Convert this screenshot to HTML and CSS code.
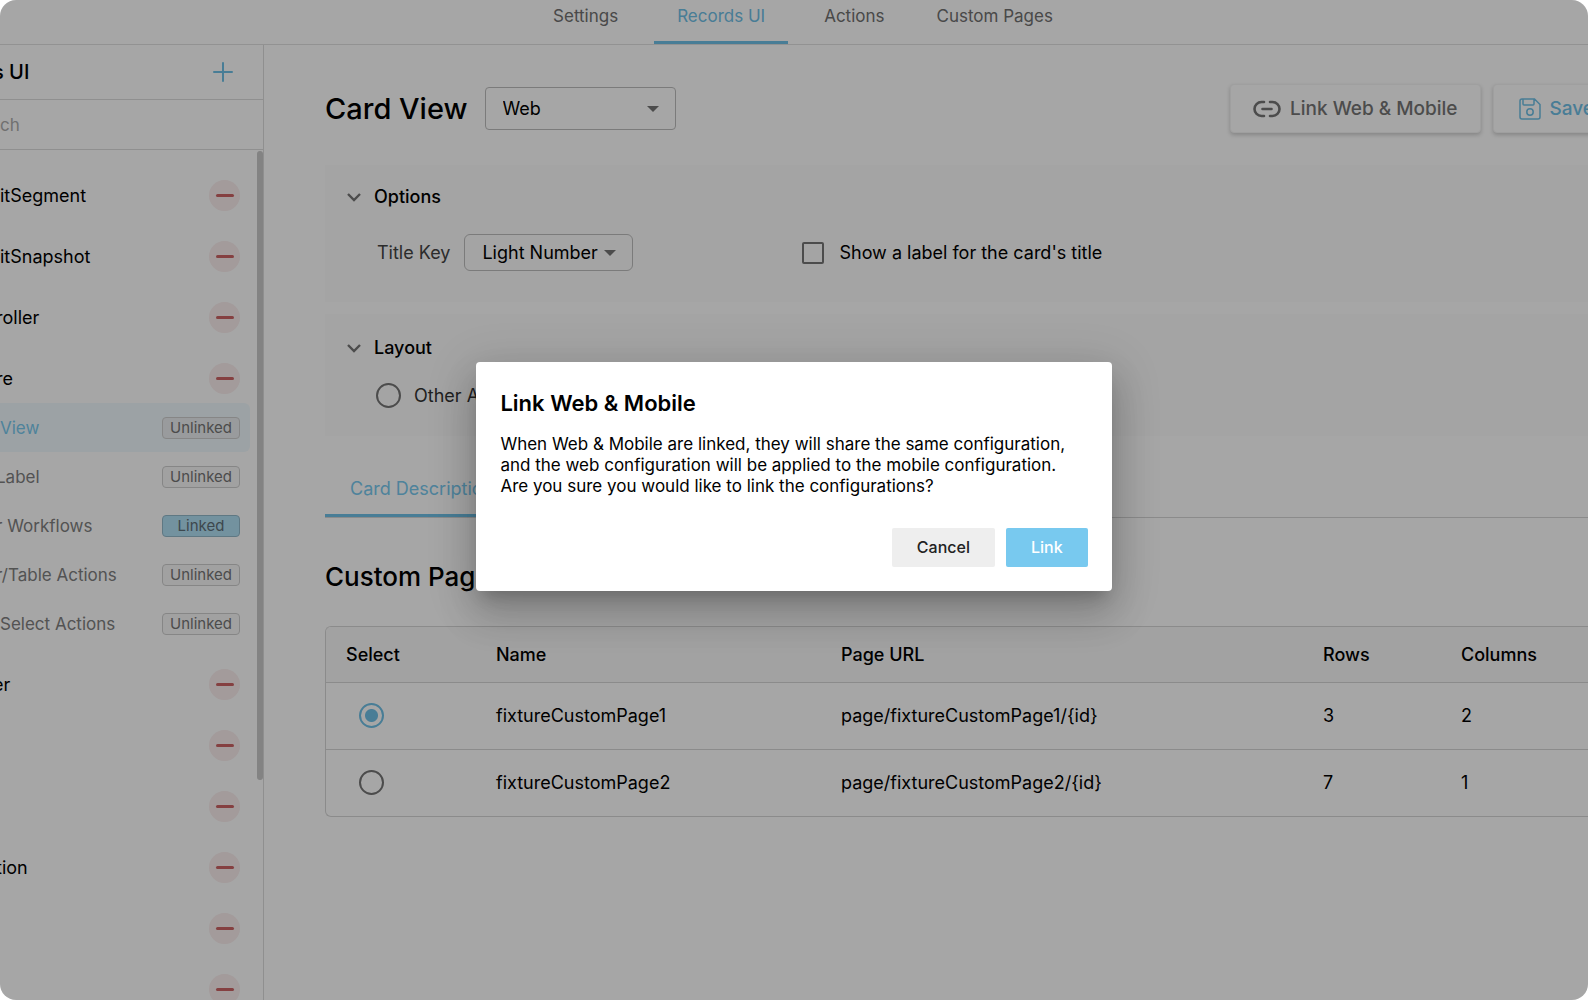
FILE: index.html
```html
<!DOCTYPE html>
<html lang="en">
<head>
    <meta charset="UTF-8">
    <meta name="viewport" content="width=device-width, initial-scale=1.0">
    <title>Records UI</title>
    <link rel="stylesheet" href="styles.css">
</head>
<body>
    <div class="app">
        <nav class="topbar">
            <a href="#" class="tab">Settings</a>
            <a href="#" class="tab active">Records UI</a>
            <a href="#" class="tab">Actions</a>
            <a href="#" class="tab wide">Custom Pages</a>
        </nav>

        <div class="layout">
            <aside class="sidebar">
                <div class="sidebar-title">
                    <h2 class="cut-deep">s UI</h2>
                    <button class="add" aria-label="Add">
                        <svg width="20" height="20" viewBox="0 0 20 20"><path d="M10 1v18M1 10h18" stroke="currentColor" stroke-width="2" stroke-linecap="round"/></svg>
                    </button>
                </div>
                <input class="search" type="text" placeholder="ch" aria-label="Search">
                <div class="list">
                    <ul class="records">
                        <li><div class="record"><span>itSegment</span><button class="remove" aria-label="Remove"></button></div></li>
                        <li><div class="record"><span>itSnapshot</span><button class="remove" aria-label="Remove"></button></div></li>
                        <li><div class="record"><span class="cut">roller</span><button class="remove" aria-label="Remove"></button></div></li>
                        <li>
                            <div class="record"><span class="cut">re</span><button class="remove" aria-label="Remove"></button></div>
                            <a href="#" class="view active"><span>View</span><span class="badge">Unlinked</span></a>
                            <a href="#" class="view"><span class="cut">Label</span><span class="badge">Unlinked</span></a>
                            <a href="#" class="view"><span class="cut">r Workflows</span><span class="badge linked">Linked</span></a>
                            <a href="#" class="view"><span class="cut">r/Table Actions</span><span class="badge">Unlinked</span></a>
                            <a href="#" class="view"><span>Select Actions</span><span class="badge">Unlinked</span></a>
                        </li>
                        <li><div class="record"><span class="cut-deep">er</span><button class="remove" aria-label="Remove"></button></div></li>
                        <li><div class="record"><span></span><button class="remove" aria-label="Remove"></button></div></li>
                        <li><div class="record"><span></span><button class="remove" aria-label="Remove"></button></div></li>
                        <li><div class="record"><span class="cut">tion</span><button class="remove" aria-label="Remove"></button></div></li>
                        <li><div class="record"><span></span><button class="remove" aria-label="Remove"></button></div></li>
                        <li><div class="record"><span></span><button class="remove" aria-label="Remove"></button></div></li>
                    </ul>
                    <div class="scrollbar"></div>
                </div>
            </aside>

            <main class="content">
                <div class="page-head">
                    <h1>Card View</h1>
                    <div class="select platform">
                        <select aria-label="Platform"><option>Web</option></select>
                    </div>
                    <div class="actions">
                        <button class="raised">
                            <svg width="28" height="18" viewBox="0 0 28 18" fill="none" stroke="currentColor" stroke-width="2.600" stroke-linecap="round"><path d="M11 2H8.500a7 7 0 0 0 0 14H11M17 2h2.500a7 7 0 0 1 0 14H17M9.500 9h9"/></svg>
                            Link Web &amp; Mobile
                        </button>
                        <button class="raised save">
                            <svg width="22" height="22" viewBox="0 0 22 22" fill="none" stroke="currentColor" stroke-width="1.500"><path d="M3 1h12.500L21 6.500V19a2 2 0 0 1-2 2H3a2 2 0 0 1-2-2V3a2 2 0 0 1 2-2zM4 1v5a1 1 0 0 0 1 1h9a1 1 0 0 0 1-1V1"/><circle cx="11" cy="14" r="3.200"/></svg>
                            Save
                        </button>
                    </div>
                </div>

                <section class="panel options">
                    <h3><svg width="14" height="9" viewBox="0 0 14 9"><path d="M1 1l6 6 6-6" fill="none" stroke="currentColor" stroke-width="2.400"/></svg>Options</h3>
                    <div class="options-row">
                        <label for="titleKey" class="key-label">Title Key</label>
                        <div class="select title-key">
                            <select id="titleKey"><option>Light Number</option></select>
                        </div>
                        <label class="check"><input type="checkbox">Show a label for the card's title</label>
                    </div>
                </section>

                <section class="panel card-layout">
                    <h3><svg width="14" height="9" viewBox="0 0 14 9"><path d="M1 1l6 6 6-6" fill="none" stroke="currentColor" stroke-width="2.400"/></svg>Layout</h3>
                    <label class="radio-label"><input type="radio" name="cardLayout">Other Actions</label>
                </section>

                <nav class="subtabs">
                    <a href="#" class="subtab">Card Description</a>
                </nav>

                <h2 class="section-title">Custom Pages</h2>
                <div class="table-wrap">
                    <table>
                        <thead>
                            <tr>
                                <th class="col-select">Select</th>
                                <th class="col-name">Name</th>
                                <th class="col-url">Page URL</th>
                                <th class="col-rows">Rows</th>
                                <th>Columns</th>
                            </tr>
                        </thead>
                        <tbody>
                            <tr>
                                <td><input type="radio" name="page" aria-label="fixtureCustomPage1" checked></td>
                                <td>fixtureCustomPage1</td>
                                <td>page/fixtureCustomPage1/{id}</td>
                                <td>3</td>
                                <td>2</td>
                            </tr>
                            <tr>
                                <td><input type="radio" name="page" aria-label="fixtureCustomPage2"></td>
                                <td>fixtureCustomPage2</td>
                                <td>page/fixtureCustomPage2/{id}</td>
                                <td>7</td>
                                <td>1</td>
                            </tr>
                        </tbody>
                    </table>
                </div>
            </main>
        </div>

        <div class="overlay">
            <div class="modal" role="dialog" aria-modal="true" aria-labelledby="modalTitle">
                <h2 id="modalTitle">Link Web &amp; Mobile</h2>
                <p>When Web &amp; Mobile are linked, they will share the same configuration, and the web configuration will be applied to the mobile configuration. Are you sure you would like to link the configurations?</p>
                <div class="modal-actions">
                    <button class="btn">Cancel</button>
                    <button class="btn primary">Link</button>
                </div>
            </div>
        </div>
    </div>
</body>
</html>
```
FILE: styles.css
```css
* {
    box-sizing: border-box;
}
body {
    margin: 0;
    background: white;
    font-family: Inter, "Liberation Sans", sans-serif;
    font-size: 18px;
    color: #000;
}
h1, h2, h3, p, ul {
    margin: 0;
    padding: 0;
}
a {
    text-decoration: none;
}
button, input, select {
    font-family: inherit;
    margin: 0;
}
button {
    border: none;
    cursor: pointer;
}
.app {
    position: relative;
    height: 100vh;
    display: flex;
    flex-direction: column;
    overflow: hidden;
    border-radius: 16px;
}

/* top navigation */
.topbar {
    display: flex;
    flex: none;
    justify-content: center;
    gap: 13px;
    height: 45px;
    padding-left: 18px;
    border-bottom: 1px solid #e0e0e0;
}
.tab {
    padding: 4px 23px 0;
    font-size: 17px;
    line-height: 24px;
    color: #707070;
}
.tab.active {
    color: #6fc0e6;
    border-bottom: 3px solid #6fc0e6;
}
.tab.wide {
    padding-left: 16px;
}
.layout {
    display: flex;
    flex: 1;
    min-height: 0;
}

/* sidebar */
.sidebar {
    flex: none;
    display: flex;
    flex-direction: column;
    width: 264px;
    overflow: hidden;
    border-right: 1px solid #dcdcdc;
}
.sidebar-title {
    display: flex;
    flex: none;
    align-items: center;
    justify-content: space-between;
    height: 55px;
    padding-right: 30px;
    border-bottom: 1px solid #dcdcdc;
}
.sidebar-title h2 {
    font-size: 20px;
    font-weight: 500;
}
.add {
    display: flex;
    padding: 0;
    background: none;
    color: #6fc0e6;
}
.search {
    flex: none;
    width: 100%;
    height: 50px;
    padding: 0;
    border: none;
    border-bottom: 1px solid #dcdcdc;
    font-size: 17px;
    outline: none;
}
.search::placeholder {
    color: #adadad;
}
.list {
    position: relative;
    flex: 1;
    min-height: 0;
}
.records {
    display: flex;
    flex-direction: column;
    gap: 12px;
    padding: 21px 13px 0 0;
    list-style: none;
}
.record, .view {
    display: flex;
    align-items: center;
    justify-content: space-between;
    height: 49px;
    padding-right: 10px;
}
/* labels that run past the left edge */
.cut {
    margin-left: -4px;
}
.cut-deep {
    margin-left: -7px;
}
.view {
    border-radius: 0 6px 6px 0;
    font-size: 17px;
    color: #808080;
}
.view.active {
    background: #f0f9fd;
    color: #78c9ef;
}
.remove {
    display: flex;
    align-items: center;
    justify-content: center;
    width: 31px;
    height: 31px;
    padding: 0;
    border-radius: 50%;
    background: #faeeee;
}
.remove::before {
    content: "";
    width: 18px;
    height: 3px;
    border-radius: 2px;
    background: #cc6364;
}
.badge {
    width: 78px;
    padding: 1px 0;
    border: 1px solid #cecece;
    border-radius: 4px;
    background: #f8f8f8;
    text-align: center;
    font-size: 15px;
    line-height: 18px;
    color: #757575;
}
.view.active .badge {
    background: #ebeff1;
}
.badge.linked {
    background: #b1e0f5;
    border-color: #93b9ca;
    color: #5f6f78;
}
.scrollbar {
    position: absolute;
    top: 1px;
    right: 0;
    width: 6px;
    height: 74%;
    border-radius: 3px;
    background: #c9c9c9;
}

/* content */
.content {
    flex: 1;
    min-width: 0;
    padding: 39px 0 0 61px;
}
.page-head {
    display: flex;
    align-items: center;
    height: 49px;
}
h1 {
    font-size: 29px;
    font-weight: 500;
    white-space: nowrap;
}
.select {
    position: relative;
    flex: none;
}
.select::after {
    content: "";
    position: absolute;
    top: 50%;
    right: 17px;
    margin-top: -3px;
    border: 6px solid transparent;
    border-top-color: #757575;
    border-bottom: none;
    pointer-events: none;
}
.select select {
    appearance: none;
    width: 100%;
    height: 100%;
    padding: 0 17px;
    border: 1px solid #bdbdbd;
    border-radius: 4px;
    background: white;
    font-size: 18px;
    color: #000;
}
.platform {
    width: 191px;
    height: 43px;
    margin-left: 17px;
}
.title-key {
    width: 169px;
    height: 37px;
    margin-left: 14px;
}
.title-key select {
    background: none;
    border-radius: 6px;
}
.actions {
    display: flex;
    gap: 12px;
    margin-left: auto;
    margin-right: -32px;
}
.raised {
    display: flex;
    align-items: center;
    gap: 9px;
    height: 49px;
    padding: 0 21px;
    border: 1px solid #f4f4f4;
    border-radius: 4px;
    background: white;
    box-shadow: 0 2px 4px rgba(0, 0, 0, 0.2);
    font-size: 19px;
    font-weight: 500;
    white-space: nowrap;
    color: #757575;
}
.save {
    padding: 0 25px;
    color: #6fc0e6;
}
.actions .raised:first-child {
    padding: 0 22px;
}
.panel {
    background: #fcfcfc;
}
.panel h3 {
    display: flex;
    align-items: center;
    gap: 13px;
    font-size: 18px;
    font-weight: 500;
    line-height: 24px;
}
.panel h3 svg {
    color: #757575;
}
.options {
    margin-top: 32px;
    padding: 20px 22px 31px;
}
.options-row {
    display: flex;
    align-items: center;
    margin-top: 25px;
    padding-left: 30px;
}
.key-label {
    color: #444;
}
.check {
    display: flex;
    align-items: center;
    gap: 15px;
    margin-left: 169px;
}
.check input {
    appearance: none;
    width: 22px;
    height: 22px;
    border: 2px solid #757575;
    border-radius: 2px;
}
.card-layout {
    margin-top: 12px;
    padding: 22px 22px 28px;
}
.radio-label {
    display: flex;
    align-items: center;
    gap: 13px;
    margin: 23px 0 0 29px;
    color: #333;
}
input[type="radio"] {
    appearance: none;
    display: block;
    width: 25px;
    height: 25px;
    border: 2px solid #757575;
    border-radius: 50%;
}
input[type="radio"]:checked {
    border-color: #6fc0e6;
    background: radial-gradient(circle, #6fc0e6 6px, transparent 7px);
}
.subtabs {
    display: flex;
    margin-top: 24px;
    border-bottom: 1px solid #d6d6d6;
}
.subtab {
    padding: 17px 25px 13px;
    border-bottom: 3px solid #6fc0e6;
    line-height: 24px;
    color: #78c9ef;
}
.section-title {
    margin-top: 42px;
    font-size: 26px;
    font-weight: 500;
    line-height: 34px;
}

/* custom pages table */
.table-wrap {
    margin-top: 32px;
    border: 1px solid #d6d6d6;
    border-right: none;
    border-radius: 6px 0 0 6px;
    overflow: hidden;
}
table {
    width: 100%;
    table-layout: fixed;
    border-collapse: collapse;
}
th, td {
    padding: 0 20px;
    text-align: left;
}
th {
    height: 55px;
    background: #f9f9f9;
    font-weight: 500;
}
td {
    height: 67px;
    border-top: 1px solid #d6d6d6;
}
td input[type="radio"] {
    margin-left: 13px;
}
.col-select {
    width: 150px;
}
.col-name {
    width: 345px;
}
.col-url {
    width: 482px;
}
.col-rows {
    width: 138px;
}

/* dialog */
.overlay {
    position: absolute;
    inset: 0;
    display: flex;
    align-items: center;
    justify-content: center;
    padding-bottom: 48px;
    background: rgba(0, 0, 0, 0.35);
}
.modal {
    width: 40%;
    min-width: 320px;
    padding: 24px;
    border-radius: 4px;
    background: white;
    box-shadow: 0 11px 15px -7px rgba(0, 0, 0, 0.2), 0 24px 38px 3px rgba(0, 0, 0, 0.14), 0 9px 46px 8px rgba(0, 0, 0, 0.12);
}
.modal h2 {
    font-size: 22px;
    font-weight: 600;
    line-height: 34px;
}
.modal p {
    margin-top: 14px;
    font-size: 17px;
    line-height: 21px;
}
.modal-actions {
    display: flex;
    justify-content: flex-end;
    gap: 11px;
    margin-top: 31px;
}
.btn {
    padding: 0 25px;
    border-radius: 2px;
    background: #eee;
    font-size: 16px;
    font-weight: 500;
    line-height: 39px;
    color: #222;
}
.btn.primary {
    background: #78c9ef;
    color: white;
}
```
